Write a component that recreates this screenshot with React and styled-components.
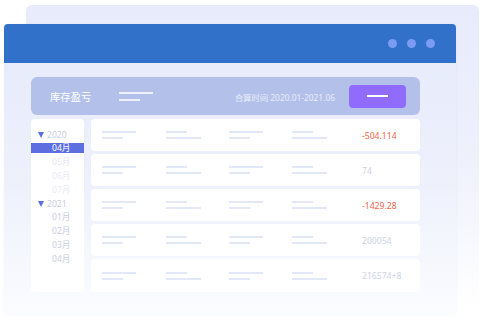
import { styled, createGlobalStyle } from "styled-components";

const Global = createGlobalStyle`
  html, body {
    margin: 0;
    padding: 0;
    background: #ffffff;
  }
  body {
    font-family: "Noto Sans", "Noto Sans CJK SC", sans-serif;
  }
`;

const Stage = styled.div`
  position: relative;
  width: 480px;
  height: 329px;
  overflow: hidden;
  padding: 24px 0 0 4px;
  box-sizing: border-box;
`;

const BackCard = styled.div`
  position: absolute;
  left: 26px;
  top: 5px;
  width: 453px;
  height: 300px;
  border-radius: 6px;
  background: linear-gradient(180deg, #e8ebfb 0%, #eef0fc 50%, #ffffff 100%);
`;

const Window = styled.div`
  position: relative;
  width: 452px;
  height: 291px;
  border-radius: 4px;
  overflow: hidden;
  display: flex;
  flex-direction: column;
  background: linear-gradient(180deg, #e5eafb 0%, #eef1fc 55%, #fbfcff 100%);
  box-shadow: 0 0 2px rgba(160, 170, 220, 0.15);
`;

const Header = styled.div`
  height: 39px;
  flex: none;
  background: #3171c9;
  display: flex;
  align-items: center;
  justify-content: flex-end;
  gap: 10px;
  padding-right: 21px;
`;

const Dot = styled.span`
  width: 9px;
  height: 9px;
  border-radius: 50%;
  background: #7b9bf4;
`;

const Body = styled.div`
  flex: 1;
  padding: 14px 36px 0 27px;
`;

const Toolbar = styled.div`
  height: 38px;
  border-radius: 6px;
  background: #b3c1ea;
  display: flex;
  align-items: center;
  padding: 0 14px 0 19px;
`;

const Title = styled.div`
  color: #ffffff;
  font-size: 10.3px;
  width: 69px;
`;

const Lines = styled.div`
  display: flex;
  flex-direction: column;
  gap: ${(p) => p.$gap}px;
  padding-top: ${(p) => p.$offset || 0}px;
`;

const Line = styled.span`
  display: block;
  width: ${(p) => p.$w}px;
  height: ${(p) => p.$h || 2}px;
  background: ${(p) => p.$color};
`;

const Period = styled.div`
  margin-left: auto;
  margin-right: 14px;
  color: #e8ebf9;
  font-size: 8.4px;
  padding-top: 2px;
`;

const Button = styled.div`
  width: 57px;
  height: 23px;
  border-radius: 4px;
  background: #916cfc;
  display: flex;
  align-items: center;
  justify-content: center;
`;

const Content = styled.div`
  display: flex;
  gap: 7px;
  margin-top: 4px;
`;

const Sidebar = styled.div`
  width: 53px;
  height: 173px;
  border-radius: 4px;
  background: #ffffff;
  padding-top: 9px;
  box-sizing: border-box;
  display: flex;
  flex-direction: column;
`;

const Year = styled.div`
  height: 13px;
  display: flex;
  align-items: center;
  gap: 3px;
  padding-left: 7px;
  font-size: 8.6px;
  color: #c6cbe3;
  margin-top: ${(p) => (p.$first ? 0 : 2)}px;
`;

const Caret = styled.span`
  width: 0;
  height: 0;
  border-left: 3.5px solid transparent;
  border-right: 3.5px solid transparent;
  border-top: 6px solid #5a6fe0;
`;

const Month = styled.div`
  height: 10px;
  line-height: 10px;
  margin-top: ${(p) => (p.$first ? 2 : 4)}px;
  padding-left: 21px;
  font-size: 8.6px;
  color: ${(p) => (p.$active ? "#ffffff" : p.$color)};
  background: ${(p) => (p.$active ? "#5d6ee0" : "transparent")};
`;

const Rows = styled.div`
  flex: 1;
  display: flex;
  flex-direction: column;
  gap: 3px;
`;

const Row = styled.div`
  height: ${(p) => p.$h}px;
  border-radius: 4px;
  background: #ffffff;
  display: grid;
  grid-template-columns: 64px 63px 63px 70px 1fr;
  align-items: center;
  padding-left: 11px;
`;

const Value = styled.div`
  font-size: 8.6px;
  color: ${(p) => (p.$neg ? "#f2634c" : "#cdd1e6")};
  padding-top: 1px;
`;

const months2020 = [
  { label: "04月", active: true },
  { label: "05月", color: "#e4e7f6" },
  { label: "06月", color: "#e8ebf7" },
  { label: "07月", color: "#e8ebf7" },
];

const months2021 = ["01月", "02月", "03月", "04月"];

const rows = [
  { value: "-504.114", h: 32 },
  { value: "74", h: 32 },
  { value: "-1429.28", h: 32 },
  { value: "200054", h: 32 },
  { value: "216574+8", h: 33 },
];

function Cell({ longFirst }) {
  const a = longFirst ? 34 : 21;
  const b = longFirst ? 21 : 35;
  return (
    <Lines $gap={4}>
      <Line $w={a} $color="#e3e8f8" />
      <Line $w={b} $color="#e3e8f8" />
    </Lines>
  );
}

export default function App() {
  return (
    <>
      <Global />
      <Stage>
        <BackCard />
        <Window>
          <Header>
            <Dot />
            <Dot />
            <Dot />
          </Header>
          <Body>
            <Toolbar>
              <Title>库存盈亏</Title>
              <Lines $gap={5} $offset={1}>
                <Line $w={34} $color="#eef1fb" />
                <Line $w={21} $color="#eef1fb" />
              </Lines>
              <Period>合算时间 2020.01-2021.06</Period>
              <Button>
                <Line $w={21} $color="#ffffff" />
              </Button>
            </Toolbar>
            <Content>
              <Sidebar>
                <Year $first>
                  <Caret />
                  2020
                </Year>
                {months2020.map((m, i) => (
                  <Month
                    key={m.label}
                    $first={i === 0}
                    $active={m.active}
                    $color={m.color}
                  >
                    {m.label}
                  </Month>
                ))}
                <Year>
                  <Caret />
                  2021
                </Year>
                {months2021.map((m, i) => (
                  <Month key={m} $first={i === 0} $color="#c9cde4">
                    {m}
                  </Month>
                ))}
              </Sidebar>
              <Rows>
                {rows.map((r) => (
                  <Row key={r.value} $h={r.h}>
                    <Cell longFirst />
                    <Cell />
                    <Cell longFirst />
                    <Cell />
                    <Value $neg={r.value.startsWith("-")}>{r.value}</Value>
                  </Row>
                ))}
              </Rows>
            </Content>
          </Body>
        </Window>
      </Stage>
    </>
  );
}
